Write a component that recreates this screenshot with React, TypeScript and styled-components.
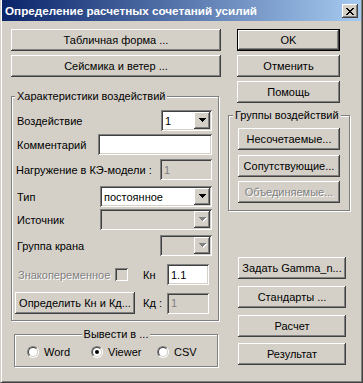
import React from "react";
import styled, { createGlobalStyle, css } from "styled-components";

const FACE = "#d4d0c8";
const SHADOW = "#808080";
const DARK = "#404040";
const HI = "#ffffff";

const Global = createGlobalStyle`
  html, body { margin: 0; padding: 0; background: ${FACE}; }
  body { font-family: "Liberation Sans", Arial, sans-serif; font-size: 11px; color: #000; }
  * { box-sizing: border-box; }
`;

const raised = css`
  box-shadow: inset -1px -1px ${DARK}, inset 1px 1px ${HI}, inset -2px -2px ${SHADOW}, inset 2px 2px ${FACE};
`;
const sunken = css`
  box-shadow: inset 1px 1px ${SHADOW}, inset -1px -1px ${HI}, inset 2px 2px ${DARK}, inset -2px -2px ${FACE};
`;
const disabledText = css`
  color: ${SHADOW};
  text-shadow: 1px 1px ${HI};
`;

const Window = styled.div`
  width: 363px;
  height: 383px;
  background: ${FACE};
  border-left: 1px solid ${FACE};
  border-right: 1px solid ${DARK};
  border-bottom: 1px solid ${DARK};
  box-shadow: inset 1px 0 ${HI}, inset -1px -1px ${SHADOW};
  padding: 0 1px 1px 1px;
  display: flex;
  flex-direction: column;
`;

const TitleBar = styled.div`
  height: 21px;
  display: flex;
  align-items: center;
  justify-content: space-between;
  padding: 1px 3px 0 3px;
  background: linear-gradient(to right, #0a246a, #a6caf0);
`;

const TitleText = styled.span`
  color: #fff;
  font-weight: bold;
  font-size: 11.7px;
  line-height: 14px;
  white-space: nowrap;
`;

const CloseBtn = styled.div`
  width: 16px;
  height: 14px;
  background: ${FACE};
  ${raised};
  display: flex;
  align-items: center;
  justify-content: center;
`;

const Client = styled.div`
  display: flex;
  padding: 8px 0 0 9px;
  gap: 7px;
`;

const LeftCol = styled.div`
  width: 210px;
  display: flex;
  flex-direction: column;
`;

const RightCol = styled.div`
  width: 122px;
  display: flex;
  flex-direction: column;
`;

const Btn = styled.button<{ $w?: number; $mt?: number; $ml?: number; $def?: boolean }>`
  height: 22px;
  width: ${(p) => (p.$w ? `${p.$w}px` : "100%")};
  margin: ${(p) => p.$mt ?? 0}px 0 0 ${(p) => p.$ml ?? 0}px;
  padding: 0;
  border: none;
  background: ${FACE};
  font-family: "Liberation Sans", Arial, sans-serif;
  font-size: 11px;
  color: #000;
  flex-shrink: 0;
  white-space: nowrap;
  ${(p) =>
    p.$def
      ? css`
          box-shadow: inset 0 0 0 1px #000, inset -2px -2px ${DARK}, inset 2px 2px ${HI}, inset -3px -3px ${SHADOW};
        `
      : raised}
  &:disabled {
    ${disabledText};
  }
`;

const Group = styled.fieldset<{ $w: number; $mt: number; $ml?: number; $pad: string }>`
  width: ${(p) => p.$w}px;
  margin: ${(p) => p.$mt}px 0 0 ${(p) => p.$ml ?? 0}px;
  padding: ${(p) => p.$pad};
  min-inline-size: 0;
  border: 1px solid ${SHADOW};
  box-shadow: inset 1px 1px ${HI}, 1px 1px ${HI};
  display: flex;
  flex-direction: column;
`;

const Legend = styled.legend<{ $ml?: number; $center?: boolean }>`
  background: ${FACE};
  padding: 0 2px;
  line-height: 13px;
  font-size: 11px;
  white-space: nowrap;
  ${(p) =>
    p.$center
      ? css`
          margin: 0 auto;
        `
      : css`
          margin-left: ${p.$ml ?? 0}px;
        `}
`;

const Row = styled.div<{ $mt: number; $h?: number }>`
  display: flex;
  align-items: center;
  height: ${(p) => p.$h ?? 21}px;
  margin-top: ${(p) => p.$mt}px;
`;

const Label = styled.span<{ $w?: number; $ml?: number; $dis?: boolean }>`
  ${(p) => (p.$w ? `width: ${p.$w}px; flex-shrink: 0;` : "flex: 1;")}
  margin-left: ${(p) => p.$ml ?? 0}px;
  white-space: nowrap;
  ${(p) => p.$dis && disabledText};
`;

const Field = styled.div<{ $w: number; $dis?: boolean }>`
  width: ${(p) => p.$w}px;
  height: 21px;
  flex-shrink: 0;
  background: ${(p) => (p.$dis ? FACE : "#fff")};
  ${sunken};
  display: flex;
  align-items: center;
  padding: 0 2px 0 4px;
  color: ${(p) => (p.$dis ? SHADOW : "#000")};
`;

const FieldText = styled.span`
  flex: 1;
  font-size: 11px;
  white-space: nowrap;
`;

const Arrow = styled.div`
  width: 16px;
  height: 17px;
  background: ${FACE};
  ${raised};
  display: flex;
  align-items: center;
  justify-content: center;
  padding-left: 1px;
`;

const Check = styled.div`
  width: 13px;
  height: 13px;
  flex-shrink: 0;
  background: ${FACE};
  ${sunken};
`;

const RadioRow = styled.div`
  display: grid;
  grid-template-columns: 64px 66px auto;
  align-items: center;
  height: 16px;
  margin: 3px 0 0 12px;
`;

const RadioItem = styled.label`
  display: flex;
  align-items: center;
  gap: 5px;
  font-size: 11px;
`;

const RadioOuter = styled.span`
  width: 12px;
  height: 12px;
  border-radius: 50%;
  border: 1px solid;
  border-color: ${SHADOW} ${HI} ${HI} ${SHADOW};
  display: flex;
  flex-shrink: 0;
`;

const RadioInner = styled.span<{ $on?: boolean }>`
  flex: 1;
  border-radius: 50%;
  border: 1px solid;
  border-color: ${DARK} ${FACE} ${FACE} ${DARK};
  background: #fff;
  display: flex;
  align-items: center;
  justify-content: center;
  &::after {
    content: "";
    width: 4px;
    height: 4px;
    border-radius: 50%;
    background: ${(p) => (p.$on ? "#000" : "transparent")};
  }
`;

const ArrowIcon = ({ dis }: { dis?: boolean }) => (
  <svg width="8" height="5" viewBox="0 0 8 5" shapeRendering="crispEdges">
    {dis && <polygon points="1,1 8,1 4.5,5" fill="#fff" />}
    <polygon points="0,0 7,0 3.5,4" fill={dis ? SHADOW : "#000"} />
  </svg>
);

const Combo = ({ w, value, dis }: { w: number; value?: string; dis?: boolean }) => (
  <Field $w={w} $dis={dis}>
    <FieldText>{value}</FieldText>
    <Arrow>
      <ArrowIcon dis={dis} />
    </Arrow>
  </Field>
);

const Radio = ({ label, on }: { label: string; on?: boolean }) => (
  <RadioItem>
    <RadioOuter>
      <RadioInner $on={on} />
    </RadioOuter>
    {label}
  </RadioItem>
);

export default function App() {
  return (
    <>
      <Global />
      <Window>
        <TitleBar>
          <TitleText>Определение расчетных сочетаний усилий</TitleText>
          <CloseBtn>
            <svg width="8" height="7" viewBox="0 0 8 7" shapeRendering="crispEdges">
              <path d="M0 0h2v1h-2zM6 0h2v1h-2zM1 1h2v1h-2zM5 1h2v1h-2zM2 2h4v1h-4zM3 3h2v1h-2zM2 4h4v1h-4zM1 5h2v1h-2zM5 5h2v1h-2zM0 6h2v1h-2zM6 6h2v1h-2z" fill="#000" />
            </svg>
          </CloseBtn>
        </TitleBar>
        <Client>
          <LeftCol>
            <Btn>Табличная форма ...</Btn>
            <Btn $mt={4}>Сейсмика и ветер ...</Btn>
            <Group $w={208} $mt={13} $pad="0 6px 6px 5px">
              <Legend $ml={-2}>Характеристики воздействий</Legend>
              <Row $mt={7}>
                <Label>Воздействие</Label>
                <Combo w={51} value="1" />
              </Row>
              <Row $mt={3}>
                <Label>Комментарий</Label>
                <Field $w={114} />
              </Row>
              <Row $mt={4}>
                <Label $ml={-1}>Нагружение в КЭ-модели :</Label>
                <Field $w={52} $dis>
                  <FieldText>1</FieldText>
                </Field>
              </Row>
              <Row $mt={6}>
                <Label>Тип</Label>
                <Combo w={112} value="постоянное" />
              </Row>
              <Row $mt={2}>
                <Label>Источник</Label>
                <Combo w={112} dis />
              </Row>
              <Row $mt={5}>
                <Label>Группа крана</Label>
                <Combo w={52} dis />
              </Row>
              <Row $mt={8}>
                <Label $w={97} $ml={1} $dis>
                  Знакопеременное
                </Label>
                <Check />
                <Label $w={24} $ml={15}>
                  Кн
                </Label>
                <Field $w={42}>
                  <FieldText>1.1</FieldText>
                </Field>
              </Row>
              <Row $mt={7} $h={22}>
                <Btn $w={120} $ml={-2}>
                  Определить Кн и Кд...
                </Btn>
                <Label $w={24} $ml={8}>
                  Кд :
                </Label>
                <Field $w={42} $dis>
                  <FieldText>1</FieldText>
                </Field>
              </Row>
            </Group>
            <Group $w={204} $mt={7} $ml={3} $pad="0 0 6px 0">
              <Legend $center>Вывести в ...</Legend>
              <RadioRow>
                <Radio label="Word" />
                <Radio label="Viewer" on />
                <Radio label="CSV" />
              </RadioRow>
            </Group>
          </LeftCol>
          <RightCol>
            <Btn $w={103} $ml={9} $def>
              OK
            </Btn>
            <Btn $w={103} $ml={9} $mt={4}>
              Отменить
            </Btn>
            <Btn $w={103} $ml={9} $mt={4}>
              Помощь
            </Btn>
            <Group $w={122} $mt={6} $pad="0 0 7px 9px">
              <Legend $ml={-5}>Группы воздействий</Legend>
              <Btn $w={102} $mt={6}>
                Несочетаемые...
              </Btn>
              <Btn $w={102} $mt={5}>
                Сопутствующие...
              </Btn>
              <Btn $w={102} $mt={4} disabled>
                Объединяемые...
              </Btn>
            </Group>
            <Btn $w={108} $ml={10} $mt={46}>
              Задать Gamma_n...
            </Btn>
            <Btn $w={108} $ml={10} $mt={7}>
              Стандарты ...
            </Btn>
            <Btn $w={108} $ml={10} $mt={7}>
              Расчет
            </Btn>
            <Btn $w={108} $ml={10} $mt={6}>
              Результат
            </Btn>
          </RightCol>
        </Client>
      </Window>
    </>
  );
}
